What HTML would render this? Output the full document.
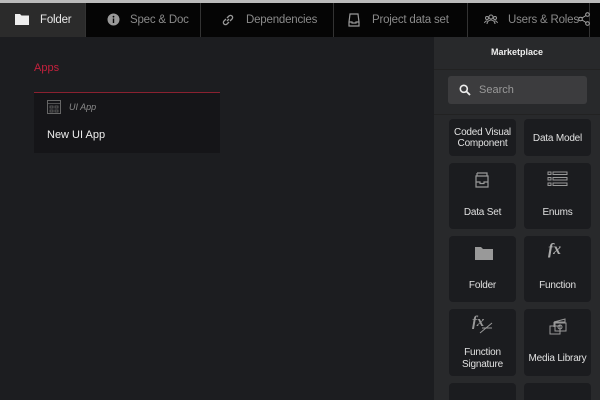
<!DOCTYPE html>
<html><head><style>
*{margin:0;padding:0;box-sizing:border-box}
html,body{width:600px;height:400px;overflow:hidden}
body{background:#1c1d20;font-family:"Liberation Sans",sans-serif;position:relative;color:#ddd}
.top{position:absolute;left:0;top:0;width:600px;height:3px;background:#bbb}
.tabs{position:absolute;left:0;top:3px;width:600px;height:34px;background:#050505}
.tab{position:absolute;top:0;height:34px;font-size:11.5px;color:#8a8a8a;line-height:34px;border-right:1px solid #333;letter-spacing:-0.2px}
.tab svg{position:absolute;top:10px}
.panel{position:absolute;left:434px;top:37px;width:166px;height:363px;background:#28292b;overflow:hidden}
.card{position:absolute;width:67px;background:#1b1c1f;border-radius:4px;font-size:10px;color:#e0e0e0;text-align:center;letter-spacing:-0.2px}
.lbl{position:absolute;left:0;width:100%}
</style></head><body>
<div class="top"></div>
<div class="tabs">
 <div class="tab" style="left:0;width:86px;background:#2b2b2b;color:#e8e8e8"><svg style="left:15px" width="14" height="12" viewBox="0 0 14 12"><path d="M0 1h5l1.5 1.5H14V12H0z" fill="#eee"/></svg><span style="position:absolute;left:40px">Folder</span></div>
 <div class="tab" style="left:86px;width:115px"><svg style="left:21px" width="13" height="13" viewBox="0 0 13 13"><circle cx="6.5" cy="6.5" r="6" fill="#999"/><rect x="5.8" y="5.5" width="1.4" height="4.5" fill="#050505"/><circle cx="6.5" cy="3.7" r=".9" fill="#050505"/></svg><span style="position:absolute;left:44px">Spec &amp; Doc</span></div>
 <div class="tab" style="left:201px;width:133px"><svg style="left:20px" width="14" height="14" viewBox="0 0 14 14"><path d="M6 8l2-2M5 6L3 8a2 2 0 003 3l2-2M9 8l2-2a2 2 0 00-3-3L6 5" stroke="#999" stroke-width="1.3" fill="none"/></svg><span style="position:absolute;left:45px">Dependencies</span></div>
 <div class="tab" style="left:334px;width:134px"><svg style="left:14px" width="12" height="14" viewBox="0 0 12 14"><path d="M2 1h8l1 8v4H1V9zM1 9h3v1h4V9h3" stroke="#999" stroke-width="1.2" fill="none"/></svg><span style="position:absolute;left:38px">Project data set</span></div>
 <div class="tab" style="left:468px;width:122px"><svg style="left:16px" width="14" height="12" viewBox="0 0 14 12"><circle cx="7" cy="4" r="2" stroke="#999" fill="none"/><circle cx="3" cy="5" r="1.5" stroke="#999" fill="none"/><circle cx="11" cy="5" r="1.5" stroke="#999" fill="none"/><path d="M3 11a4 4 0 018 0M0.5 10a2.5 2.5 0 013-2M13.5 10a2.5 2.5 0 00-3-2" stroke="#999" fill="none"/></svg><span style="position:absolute;left:40px">Users &amp; Roles</span><svg style="left:110px;top:9px" width="12" height="14" viewBox="0 0 12 14"><circle cx="9.5" cy="2.5" r="1.8" stroke="#aaa" fill="none"/><circle cx="2.5" cy="7" r="1.8" stroke="#aaa" fill="none"/><circle cx="9.5" cy="11.5" r="1.8" stroke="#aaa" fill="none"/><path d="M4 6l4-2.5M4 8l4 2.5" stroke="#aaa"/></svg></div>
</div>
<div style="position:absolute;left:34px;top:62px;font-size:11px;color:#c4213d">Apps</div>
<div style="position:absolute;left:34px;top:92px;width:186px;height:61px;background:#151518;border-top:1.5px solid #8a2130">
 <svg style="position:absolute;left:13px;top:7px" width="14" height="14" viewBox="0 0 14 14"><rect x=".5" y=".5" width="13" height="13" stroke="#666" fill="none"/><path d="M.5 3.5h13M3 6h3v2H3zM8 6h3v2H8zM3 10h3v2H3zM8 10h3v2H8z" stroke="#666" fill="none" stroke-width=".8"/></svg>
 <span style="position:absolute;left:35px;top:9px;font-size:9px;font-style:italic;color:#8a8a8a">UI App</span>
 <span style="position:absolute;left:13px;top:36px;font-size:11px;color:#eee">New UI App</span>
</div>
<div class="panel">
 <div style="position:absolute;top:10px;width:100%;text-align:center;font-size:9px;font-weight:bold;color:#eee">Marketplace</div>
 <div style="position:absolute;left:0;top:32px;width:166px;height:1px;background:#222"></div>
 <div style="position:absolute;left:14px;top:39px;width:139px;height:28px;background:#3c3c3e;border-radius:3px">
  <svg style="position:absolute;left:11px;top:8px" width="12" height="12" viewBox="0 0 12 12"><circle cx="4.8" cy="4.8" r="3.5" stroke="#eee" stroke-width="1.6" fill="none"/><path d="M7.5 7.5L11 11" stroke="#eee" stroke-width="1.8"/></svg>
  <span style="position:absolute;left:31px;top:8px;font-size:11px;color:#999">Search</span>
 </div>
 <div style="position:absolute;left:0;top:77px;width:166px;height:1px;background:#222"></div>
 <div class="card" style="left:15px;top:82px;height:37px"><div class="lbl" style="top:8px;line-height:11px">Coded Visual<br>Component</div></div>
 <div class="card" style="left:90px;top:82px;height:37px"><div class="lbl" style="top:14px">Data Model</div></div>
 <div class="card" style="left:15px;top:126px;height:66px"><svg style="position:absolute;left:26px;top:9px" width="14" height="16" viewBox="0 0 14 16"><path d="M2 1h10v3M2 1v3M1 4h12v11H1zM1 10h4v1.5h4V10h4" stroke="#999" stroke-width="1.2" fill="none"/></svg><div class="lbl" style="top:44px">Data Set</div></div>
 <div class="card" style="left:90px;top:126px;height:66px"><svg style="position:absolute;left:23px;top:8px" width="22" height="16" viewBox="0 0 22 16"><g stroke="#999" fill="none"><rect x="1" y="1" width="3" height="2.5"/><rect x="6" y="1" width="14" height="2.5"/><rect x="1" y="6.5" width="3" height="2.5"/><rect x="6" y="6.5" width="14" height="2.5"/><rect x="1" y="12" width="3" height="2.5"/><rect x="6" y="12" width="14" height="2.5"/></g></svg><div class="lbl" style="top:44px">Enums</div></div>
 <div class="card" style="left:15px;top:199px;height:66px"><svg style="position:absolute;left:26px;top:10px" width="18" height="14" viewBox="0 0 18 14"><path d="M0 1h6l2 2h10v11H0z" fill="#999"/></svg><div class="lbl" style="top:44px">Folder</div></div>
 <div class="card" style="left:90px;top:199px;height:66px"><div style="position:absolute;left:24px;top:5px;font:italic bold 16px 'Liberation Serif',serif;color:#aaa">fx</div><div class="lbl" style="top:44px">Function</div></div>
 <div class="card" style="left:15px;top:272px;height:67px"><div style="position:absolute;left:23px;top:5px;font:italic bold 15px 'Liberation Serif',serif;color:#999">fx</div><svg style="position:absolute;left:30px;top:13px" width="14" height="12"><path d="M1 11L13 1M3 6l10 0" stroke="#999"/></svg><div class="lbl" style="top:38px;line-height:12px">Function<br>Signature</div></div>
 <div class="card" style="left:90px;top:272px;height:67px"><svg style="position:absolute;left:25px;top:8px" width="18" height="18" viewBox="0 0 18 18"><g stroke="#999" fill="none"><path d="M5 5l11-3v3H5zM5 5v5"/><rect x="1" y="9" width="10" height="8"/><rect x="6" y="6" width="11" height="8"/><circle cx="11" cy="10" r="2"/></g></svg><div class="lbl" style="top:44px">Media Library</div></div>
 <div class="card" style="left:15px;top:346px;height:17px;border-radius:4px 4px 0 0"></div>
 <div class="card" style="left:90px;top:346px;height:17px;border-radius:4px 4px 0 0"></div>
</div>
</body></html>
